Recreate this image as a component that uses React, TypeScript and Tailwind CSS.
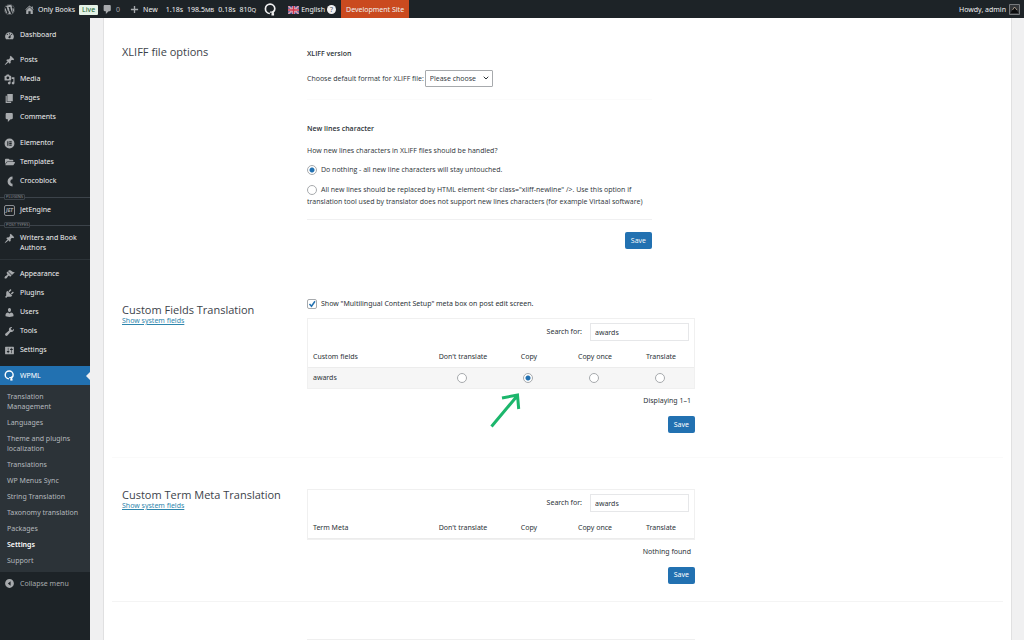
import type { ReactNode } from "react";
import { useState } from "react";
import { ChevronDown } from "lucide-react";
import { FaFolderOpen, FaWordpress } from "react-icons/fa";

const PATHS = {
  dashboard:
    "M3.76 17h12.48c1.1-1.37 1.76-3.11 1.76-5 0-4.42-3.58-8-8-8s-8 3.58-8 8c0 1.89.66 3.63 1.76 5zM10 6c.55 0 1 .45 1 1s-.45 1-1 1-1-.45-1-1 .45-1 1-1zM6 7c.55 0 1 .45 1 1s-.45 1-1 1-1-.45-1-1 .45-1 1-1zm8 0c.55 0 1 .45 1 1s-.45 1-1 1-1-.45-1-1 .45-1 1-1zM9 12l3-4v5c0 1.1-.9 2-2 2s-2-.9-2-2c0-.4.4-.7 1-1z",
  pin: "M10.44 3.02l1.82-1.82 6.36 6.35-1.83 1.82c-1.05-.68-2.48-.57-3.41.36l-.75.75c-.92.93-1.04 2.35-.35 3.41l-1.83 1.82-2.41-2.41-2.8 2.79c-.42.42-3.38 2.71-3.8 2.29s1.86-3.39 2.28-3.81l2.79-2.79L4.1 9.36l1.83-1.82c1.05.69 2.48.57 3.4-.36l.75-.75c.93-.92 1.05-2.35.36-3.41z",
  media:
    "M13 11V4c0-.55-.45-1-1-1h-1.67L9 1H5L3.67 3H2c-.55 0-1 .45-1 1v7c0 .55.45 1 1 1h10c.55 0 1-.45 1-1zM7 4.5c1.38 0 2.5 1.12 2.5 2.5S8.38 9.5 7 9.5 4.5 8.38 4.5 7 5.62 4.5 7 4.5zM14 6h5v10.5c0 1.38-1.12 2.5-2.5 2.5S14 17.88 14 16.5s1.12-2.5 2.5-2.5c.17 0 .34.02.5.05V9h-3V6zm-4 8.05V13h2v3.5c0 1.38-1.12 2.5-2.5 2.5S7 17.88 7 16.5 8.12 14 9.5 14c.17 0 .34.02.5.05z",
  page: "M6 15V2h10v13H6zm-1 1h8v2H3V5h2v11z",
  comment: "M5 2h9c1.1 0 2 .9 2 2v7c0 1.1-.9 2-2 2h-2l-5 5v-5H5c-1.1 0-2-.9-2-2V4c0-1.1.9-2 2-2z",
  elementor: "M10 1a9 9 0 1 0 0 18 9 9 0 0 0 0-18zM6 6h2v8H6zm3.5 0H14v2H9.5zm0 3H14v2H9.5zm0 3H14v2H9.5z",
  appearance:
    "M14.48 11.06L7.41 3.99l1.5-1.5c.5-.56 2.3-.47 3.51.32 1.21.8 1.43 1.28 2.91 2.1 1.18.64 2.45 1.26 4.45.85zm-.71.71L6.7 4.7 4.93 6.47c-.39.39-.39 1.02 0 1.41l1.06 1.06c.39.39.39 1.03 0 1.42-.6.6-1.43 1.11-2.21 1.69-.35.26-.7.53-1.01.84C1.43 14.23.4 16.08 1.4 17.07c.99 1 2.84-.03 4.18-1.36.31-.31.58-.66.85-1.02.57-.78 1.08-1.61 1.69-2.21.39-.39 1.02-.39 1.41 0l1.06 1.06c.39.39 1.02.39 1.41 0z",
  plugins:
    "M13.11 4.36L9.87 7.6 8 5.73l3.24-3.24c.35-.34 1.05-.2 1.56.32.52.51.66 1.21.31 1.55zm-8 1.77l.91-1.12 9.01 9.01-1.19.84c-.71.71-2.63 1.16-3.82 1.16H6.14L4.9 17.26c-.59.59-1.54.59-2.12 0-.59-.58-.59-1.53 0-2.12l1.24-1.24v-3.88c0-1.13.4-3.19 1.09-3.89zm7.26 3.97l3.24-3.24c.34-.35 1.04-.21 1.55.31.52.51.66 1.21.31 1.55l-3.24 3.25z",
  users:
    "M10 9.25c-2.27 0-2.73-3.44-2.73-3.44C7 4.02 7.82 2 9.97 2c2.16 0 2.98 2.02 2.71 3.81 0 0-.41 3.44-2.68 3.44zm0 2.57L12.72 10c2.39 0 4.52 2.33 4.52 4.53v2.49s-3.65 1.13-7.24 1.13c-3.65 0-7.24-1.13-7.24-1.13v-2.49c0-2.25 1.94-4.48 4.47-4.48z",
  tools:
    "M16.68 9.77c-1.34 1.34-3.3 1.67-4.95.99l-5.41 6.52c-.99.99-2.59.99-3.58 0s-.99-2.59 0-3.57l6.52-5.42c-.68-1.65-.35-3.61.99-4.95 1.28-1.28 3.12-1.62 4.72-1.06l-2.89 2.89 2.82 2.82 2.86-2.87c.53 1.58.18 3.39-1.08 4.65z",
  settings:
    "M18 16V4c0-.55-.45-1-1-1H3c-.55 0-1 .45-1 1v12c0 .55.45 1 1 1h14c.55 0 1-.45 1-1zM8 11h1c.55 0 1 .45 1 1s-.45 1-1 1H8v1.5c0 .28-.22.5-.5.5s-.5-.22-.5-.5V13H6c-.55 0-1-.45-1-1s.45-1 1-1h1V5.5c0-.28.22-.5.5-.5s.5.22.5.5V11zm5-2h-1c-.55 0-1-.45-1-1s.45-1 1-1h1V5.5c0-.28.22-.5.5-.5s.5.22.5.5V7h1c.55 0 1 .45 1 1s-.45 1-1 1h-1v5.5c0 .28-.22.5-.5.5s-.5-.22-.5-.5V9z",
  home: "M16 8.5l1.53 1.53-1.06 1.06L10 4.6l-6.47 6.49-1.06-1.06L10 2.5l4 4v-2h2v4zm-6-2.46l6 5.99V18h-4v-5H8v5H4v-5.97z",
  plus: "M18 8.5v3h-6.5V18h-3v-6.5H2v-3h6.5V2h3v6.5z",
  collapse: "M10 2c4.42 0 8 3.58 8 8s-3.58 8-8 8-8-3.58-8-8 3.58-8 8-8zm2 12V6l-5 4z",
};

function Dashicon({ name, size = 11 }: { name: keyof typeof PATHS; size?: number }) {
  return (
    <svg width={size} height={size} viewBox="0 0 20 20" fill="currentColor" fillRule="evenodd" className="shrink-0" aria-hidden>
      <path d={PATHS[name]} />
    </svg>
  );
}

function WpmlLogo({ size = 11 }: { size?: number }) {
  return (
    <svg width={size} height={size} viewBox="0 0 20 20" fill="none" stroke="currentColor" strokeWidth="2.6" className="shrink-0" aria-hidden>
      <path d="M9 16.2A7.2 7.2 0 1 1 16.600 9c0 2-.8 3.4-2.2 4.7-1.2 1.2-1.4 2.3-.6 3.8" />
      <path d="M9.5 13.5c2 .8 4.3.3 5.5-1.5" strokeWidth="2" />
      <path d="M11.5 17.5h4" strokeWidth="3.5" />
    </svg>
  );
}

function CrocoIcon() {
  return (
    <svg width="11" height="11" viewBox="0 0 20 20" fill="none" stroke="currentColor" strokeWidth="5" aria-hidden>
      <path d="M15.5 3.5a6.5 6.5 0 0 0 0 13" />
    </svg>
  );
}

function JetIcon() {
  return (
    <span className="flex size-[11px] items-center justify-center rounded-xs border border-[#8c8f94] text-[5px] leading-none font-bold italic">
      JET
    </span>
  );
}

function UkFlag() {
  return (
    <svg width="11" height="8" viewBox="0 0 22 16" aria-hidden>
      <path fill="#3c4a8c" d="M0 0h22v16H0z" />
      <path stroke="#e0c8d4" strokeWidth="3" d="M0 0l22 16M22 0L0 16" />
      <path stroke="#d0455a" strokeWidth="1.2" d="M0 0l22 16M22 0L0 16" />
      <path stroke="#e8ccd6" strokeWidth="5" d="M11 0v16M0 8h22" />
      <path stroke="#cf3048" strokeWidth="3" d="M11 0v16M0 8h22" />
    </svg>
  );
}

function AdminBar() {
  return (
    <header className="flex h-[18px] items-center bg-[#1d2327] pt-px text-[7px] leading-[10px] whitespace-nowrap text-[#f0f0f1]">
      <a href="#" aria-label="About WordPress" className="ml-1 text-[#a7aaad]">
        <FaWordpress size={11} />
      </a>
      <a href="#" className="ml-[9px] flex items-center gap-[3px]">
        <span className="text-[#a7aaad]"><Dashicon name="home" /></span>
        Only Books
      </a>
      <span className="ml-1 rounded-[1px] bg-[#e4f2e6] px-[3px] text-[#17632f]">Live</span>
      <a href="#" className="ml-1 flex items-center gap-[3px] text-[#a7aaad]">
        <Dashicon name="comment" />0
      </a>
      <a href="#" className="ml-[10px] flex items-center gap-1">
        <span className="text-[#a7aaad]"><Dashicon name="plus" size={9} /></span>
        New
      </a>
      <div className="ml-2 flex gap-1">
        <span>1.18s</span>
        <span>198.5<span className="text-[6px]">MB</span></span>
        <span>0.18s</span>
        <span>810<span className="text-[6px]">Q</span></span>
      </div>
      <a href="#" aria-label="WPML" className="ml-2"><WpmlLogo size={13} /></a>
      <a href="#" className="ml-[11px] flex items-center gap-[2px]">
        <UkFlag />
        English
        <span className="flex size-[9px] items-center justify-center rounded-full bg-[#f0f0f1] text-[#50575e]">?</span>
      </a>
      <a href="#" className="-mt-px ml-[5px] flex h-[18px] items-center bg-[#ca4a1f] px-[5px] pt-px">Development Site</a>
      <a href="#" className="mr-1 ml-auto flex items-center gap-[3px]">
        Howdy, admin
        <svg width="11" height="11" viewBox="0 0 22 22" aria-hidden>
          <path fill="#34373a" stroke="#777a7d" strokeWidth="2" d="M1 1h20v20H1z" />
          <path fill="#0b0c0d" d="M3 18l5-8 4-3 7 11z" />
          <path stroke="#c9b8a4" strokeWidth="1.5" fill="none" d="M7 12l4-6 5 6" />
        </svg>
      </a>
    </header>
  );
}

function MenuItem({ icon, children }: { icon: ReactNode; children: ReactNode }) {
  return (
    <a href="#" className="flex items-start gap-[5px] pt-[5px] pr-1 pb-1 pl-1 text-[#f0f0f1]">
      <span className="flex h-[10px] w-[11px] shrink-0 items-center justify-center text-[#a7aaad]">{icon}</span>
      {children}
    </a>
  );
}

function GroupLabel({ children }: { children: ReactNode }) {
  return (
    <div className="flex h-[6px] items-center">
      <span className="h-px w-1 bg-[#3c434a]" />
      <span className="rounded-[1px] border border-[#3c434a] px-px text-[4px] leading-[4px] text-[#8c8f94]">{children}</span>
      <span className="h-px flex-1 bg-[#3c434a]" />
    </div>
  );
}

const SUBMENU = [
  "Translation Management",
  "Languages",
  "Theme and plugins localization",
  "Translations",
  "WP Menus Sync",
  "String Translation",
  "Taxonomy translation",
  "Packages",
  "Settings",
  "Support",
];

function Sidebar() {
  return (
    <nav className="w-[90px] shrink-0 bg-[#1d2327] pt-[7px] text-[7px] leading-[10px]">
      <MenuItem icon={<Dashicon name="dashboard" />}>Dashboard</MenuItem>
      <div className="mt-[6px]">
        <MenuItem icon={<Dashicon name="pin" />}>Posts</MenuItem>
        <MenuItem icon={<Dashicon name="media" />}>Media</MenuItem>
        <MenuItem icon={<Dashicon name="page" />}>Pages</MenuItem>
        <MenuItem icon={<Dashicon name="comment" />}>Comments</MenuItem>
      </div>
      <div className="mt-[7px]">
        <MenuItem icon={<Dashicon name="elementor" />}>Elementor</MenuItem>
        <MenuItem icon={<FaFolderOpen size={10} />}>Templates</MenuItem>
        <MenuItem icon={<CrocoIcon />}>Crocoblock</MenuItem>
      </div>
      <div className="mt-1">
        <GroupLabel>PLUGINS</GroupLabel>
        <MenuItem icon={<JetIcon />}>JetEngine</MenuItem>
      </div>
      <div className="mt-[3px] border-b border-[#2c3338] pb-[2px]">
        <GroupLabel>POST TYPES</GroupLabel>
        <MenuItem icon={<Dashicon name="pin" />}>Writers and Book Authors</MenuItem>
      </div>
      <div className="mt-1">
        <MenuItem icon={<Dashicon name="appearance" />}>Appearance</MenuItem>
        <MenuItem icon={<Dashicon name="plugins" />}>Plugins</MenuItem>
        <MenuItem icon={<Dashicon name="users" />}>Users</MenuItem>
        <MenuItem icon={<Dashicon name="tools" />}>Tools</MenuItem>
        <MenuItem icon={<Dashicon name="settings" />}>Settings</MenuItem>
      </div>
      <a href="#" className="mt-[7px] flex h-[19px] items-center gap-[5px] bg-[#2271b1] pl-1 text-white">
        <WpmlLogo />
        WPML
        <span className="ml-auto border-y-4 border-r-4 border-y-transparent border-r-[#f0f0f1]" />
      </a>
      <ul className="bg-[#2c3338] pt-1 pb-[3px]">
        {SUBMENU.map((label) => (
          <li key={label}>
            <a
              href="#"
              className={`block py-[3px] pr-2 pl-[7px] ${label === "Settings" ? "font-semibold text-white" : "text-[#b4b9be]"}`}
            >
              {label}
            </a>
          </li>
        ))}
      </ul>
      <button type="button" className="flex items-center gap-[5px] pt-[6px] pl-1 text-[#a7aaad]">
        <Dashicon name="collapse" />
        Collapse menu
      </button>
    </nav>
  );
}

const RADIO =
  "size-[10px] shrink-0 appearance-none rounded-full border border-[#a7aaad] bg-white checked:bg-[radial-gradient(circle,#2271b1_2px,transparent_3px)]";

function SaveButton() {
  return (
    <button type="button" className="ml-auto block h-[17px] rounded-[2px] bg-[#2271b1] px-[6px] text-white">
      Save
    </button>
  );
}

function SectionTitle({ title, link }: { title: string; link?: boolean }) {
  return (
    <div>
      <h2 className="font-['Open_Sans',sans-serif] text-[11px] leading-[15px] text-[#3c434a]">{title}</h2>
      {link && (
        <a href="#" className="block leading-[8px] text-[#2f86ad] underline">Show system fields</a>
      )}
    </div>
  );
}

const OPTIONS = ["Don't translate", "Copy", "Copy once", "Translate"];

function FieldsTable({ id, heading, rows }: { id: string; heading: string; rows: string[] }) {
  const [search, setSearch] = useState("awards");

  return (
    <div className="border border-[#f0f0f0]">
      <div className="flex items-center justify-end gap-2 pt-1 pr-[5px]">
        <label htmlFor={id}>Search for:</label>
        <input
          id={id}
          type="text"
          value={search}
          onChange={(e) => setSearch(e.target.value)}
          className="h-[18px] w-[99px] border border-[#e6e7e9] px-1"
        />
      </div>
      <table className="w-full table-fixed">
        <thead>
          <tr className="h-[26px] border-b border-[#ececec]">
            <th scope="col" className="pt-[6px] pl-[5px] text-left font-normal">{heading}</th>
            {OPTIONS.map((option) => (
              <th key={option} scope="col" className="w-[66px] pt-[6px] text-center font-normal">{option}</th>
            ))}
          </tr>
        </thead>
        <tbody>
          {rows.map((row) => (
            <tr key={row} className="h-[21px] bg-[#f6f6f6]">
              <td className="pl-[5px]">{row}</td>
              {OPTIONS.map((option) => (
                <td key={option} className="pr-[2px]">
                  <input
                    type="radio"
                    name={`${id}-${row}`}
                    aria-label={`${row}: ${option}`}
                    defaultChecked={option === "Copy"}
                    className={`${RADIO} mx-auto block`}
                  />
                </td>
              ))}
            </tr>
          ))}
        </tbody>
      </table>
    </div>
  );
}

export default function App() {
  return (
    <div className="flex min-h-screen flex-col bg-[#f0f0f1] font-['Noto_Sans',sans-serif] text-[7px] leading-[10px] text-[#2c3338]">
      <AdminBar />
      <div className="flex flex-1">
        <Sidebar />
        <main className="ml-[13px] mr-3 flex-1 border-x border-[#e0e0e1] bg-white px-2">
          <section className="grid grid-cols-[185px_1fr] px-[10px] pt-[26px] pb-[50px]">
            <SectionTitle title="XLIFF file options" />
            <div className="max-w-[345px] pt-[5px] font-['Open_Sans',sans-serif]">
              <h3 className="font-semibold">XLIFF version</h3>
              <div className="mt-[11px] flex items-center gap-px">
                <label htmlFor="xliff-version">Choose default format for XLIFF file:</label>
                <div className="relative">
                  <select id="xliff-version" className="h-[17px] w-[68px] appearance-none rounded-[1px] border border-[#a7aaad] pl-1">
                    <option>Please choose</option>
                  </select>
                  <ChevronDown size={8} strokeWidth={3} className="pointer-events-none absolute top-[4px] right-[3px]" />
                </div>
              </div>
              <hr className="mt-3 border-[#fbfbfb]" />

              <h3 className="mt-6 font-semibold">New lines character</h3>
              <p className="mt-3">How new lines characters in XLIFF files should be handled?</p>
              <label className="mt-[9px] flex items-center gap-1">
                <input type="radio" name="newline" defaultChecked className={RADIO} />
                Do nothing - all new line characters will stay untouched.
              </label>
              <label className="mt-[9px] block leading-3">
                <input type="radio" name="newline" className={`${RADIO} mr-1 inline-block align-middle`} />
                All new lines should be replaced by HTML element &lt;br class="xliff-newline" /&gt;. Use this option if
                translation tool used by translator does not support new lines characters (for example Virtaal software)
              </label>
              <hr className="mt-[11px] mb-3 border-[#f0f0f1]" />
              <SaveButton />
            </div>
          </section>

          <section className="grid grid-cols-[185px_1fr] border-b border-[#fafafa] px-[10px] pb-6">
            <div className="pt-[3px]">
              <SectionTitle title="Custom Fields Translation" link />
            </div>
            <div className="relative max-w-[388px]">
              <label className="mb-[9px] flex items-center gap-1">
                <span className="relative size-[10px]">
                  <input type="checkbox" defaultChecked className="peer block size-[10px] appearance-none rounded-[2px] border border-[#a7aaad]" />
                  <svg viewBox="0 0 20 20" className="pointer-events-none absolute inset-0 hidden peer-checked:block" fill="none" stroke="#2271b1" strokeWidth="3" aria-hidden>
                    <path d="M5 10l4 4.5 7-10" />
                  </svg>
                </span>
                Show "Multilingual Content Setup" meta box on post edit screen.
              </label>
              <FieldsTable id="search-fields" heading="Custom fields" rows={["awards"]} />
              <p className="mt-[7px] mb-[10px] pr-1 text-right">Displaying 1–1</p>
              <SaveButton />
              <svg width="32" height="36" viewBox="0 0 32 36" fill="none" stroke="#1cb66c" strokeWidth="3" className="absolute top-[93px] left-[182px]" aria-hidden>
                <path d="M2.5 34.500L28.5 3.5M13 6l15.500-3 1.2 14" />
              </svg>
            </div>
          </section>

          <section className="grid grid-cols-[185px_1fr] border-b border-[#f4f4f4] px-[10px] pt-[29px] pb-[17px]">
            <SectionTitle title="Custom Term Meta Translation" link />
            <div className="max-w-[388px] pt-[2px]">
              <FieldsTable id="search-terms" heading="Term Meta" rows={[]} />
              <p className="mt-[7px] mb-[10px] pr-1 text-right">Nothing found</p>
              <SaveButton />
            </div>
          </section>

          <section className="grid grid-cols-[185px_1fr] px-[10px] pt-[37px]">
            <hr className="col-start-2 max-w-[388px] border-[#efefef]" />
          </section>
        </main>
      </div>
    </div>
  );
}
